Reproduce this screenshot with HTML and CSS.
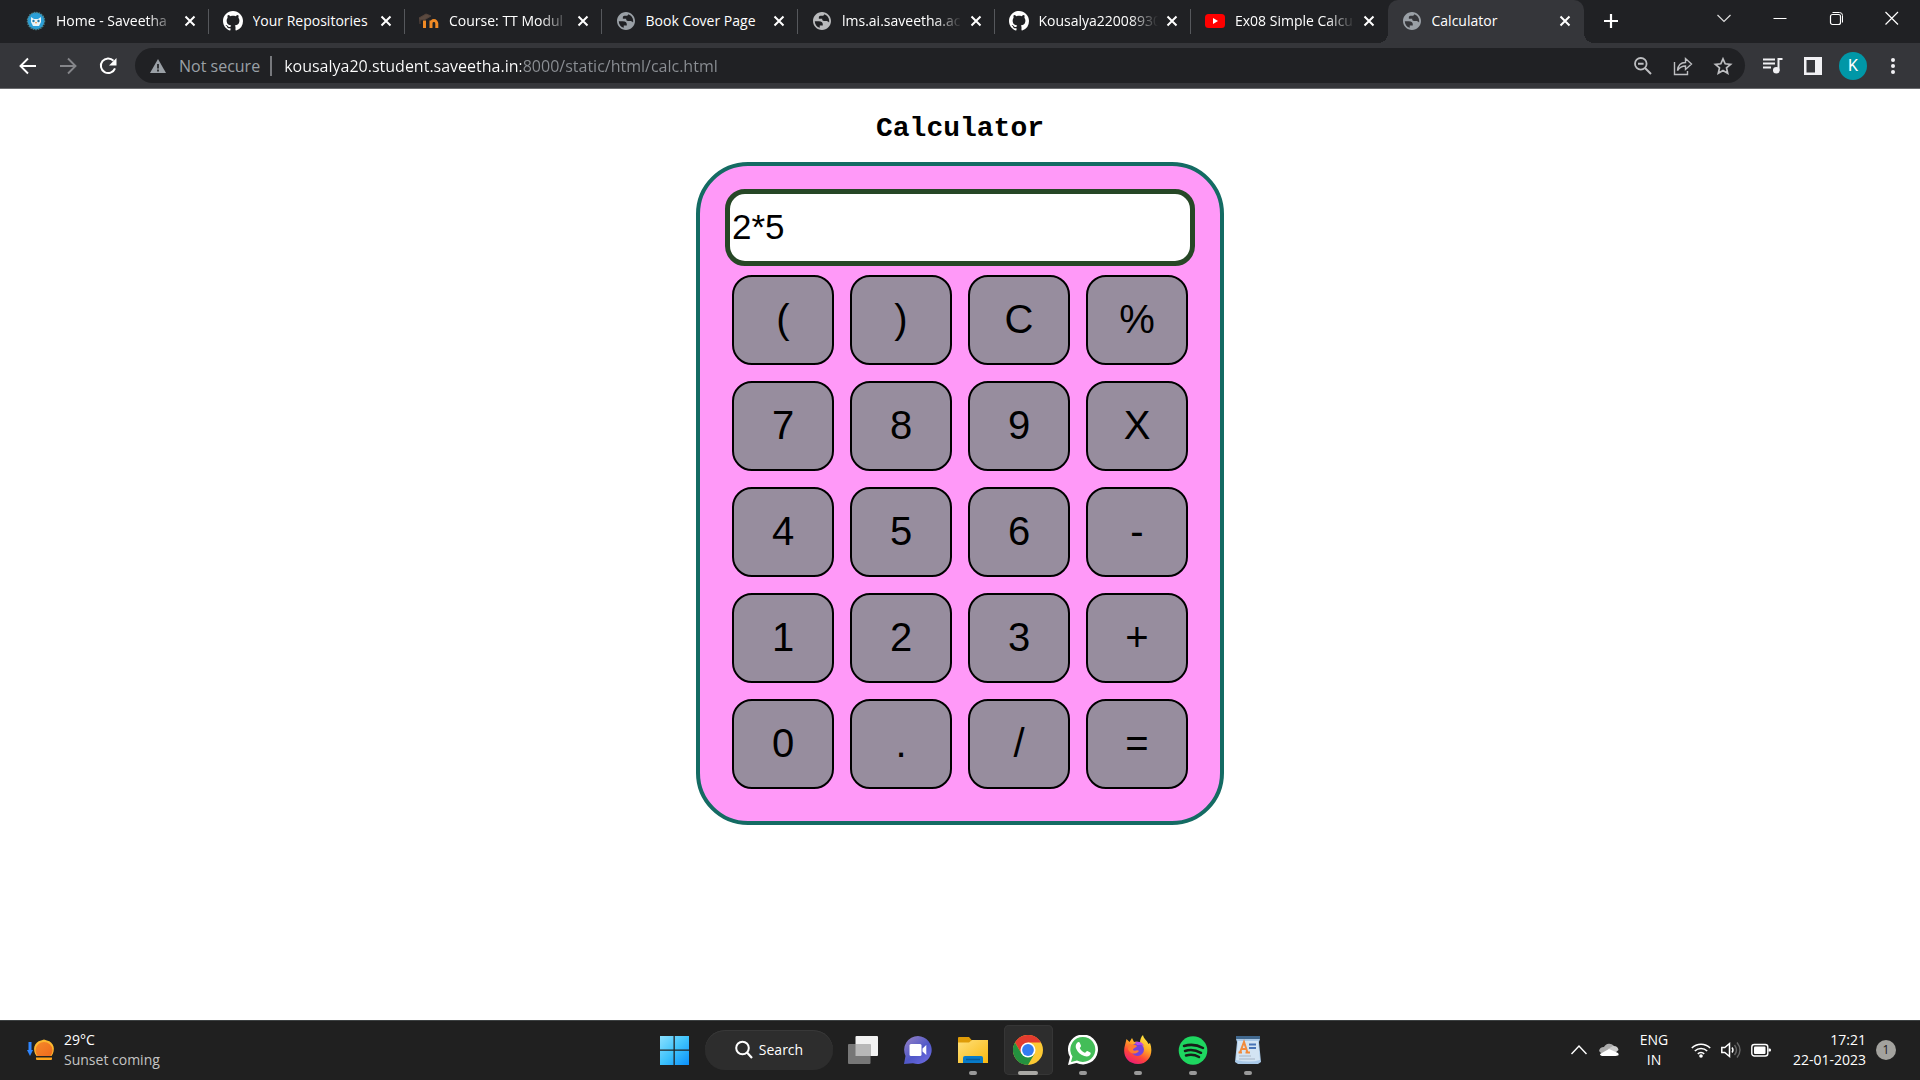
FILE: index.html
```html
<!DOCTYPE html>
<html lang="en">
<head>
<meta charset="utf-8">
<meta name="viewport" content="width=device-width, initial-scale=1">
<title>Calculator</title>
<link rel="stylesheet" href="styles.css">
</head>
<body>
<svg class="defs" aria-hidden="true">
  <defs>
    <symbol id="x" viewBox="0 0 20 20"><path d="M5.500 5.500l9 9M14.500 5.500l-9 9" stroke="currentColor" stroke-width="2" fill="none"/></symbol>
    <symbol id="globe" viewBox="2 2 20 20"><path fill="currentColor" d="M12 2C6.480 2 2 6.480 2 12s4.480 10 10 10 10-4.480 10-10S17.520 2 12 2zM4 12.200h4.400c3.400 0 4.900 1.600 4.500 4.700H9.500v2.700C6.300 18.500 4 15.700 4 12.200zM14.500 4.400C17.700 5.500 20 8.500 20 12c0 .6-.1 1.100-.2 1.600-.8-1-1.900-1.600-3.200-1.600h-2.500c-1 0-1.900-.9-1.900-1.900V9.500H8.500V7.800c0-.9.800-1.700 1.700-1.700h2.500c.9 0 1.700-.8 1.800-1.700z"/></symbol>
    <symbol id="octocat" viewBox="0 0 16 16"><path fill="#fff" d="M8 0C3.580 0 0 3.580 0 8c0 3.540 2.290 6.530 5.470 7.590.4.070.55-.17.55-.38 0-.19-.01-.82-.01-1.490-2.010.37-2.530-.49-2.690-.94-.09-.23-.48-.94-.82-1.130-.28-.15-.68-.52-.01-.53.63-.01 1.080.58 1.230.82.720 1.210 1.870.87 2.330.66.070-.52.280-.87.510-1.070-1.780-.2-3.640-.89-3.640-3.950 0-.87.310-1.590.82-2.150-.08-.2-.36-1.020.08-2.120 0 0 .67-.21 2.200.82.640-.18 1.320-.27 2-.27s1.360.09 2 .27c1.530-1.040 2.200-.82 2.200-.82.440 1.100.160 1.920.080 2.120.510.560.820 1.270.820 2.150 0 3.070-1.870 3.750-3.650 3.950.290.250.540.730.540 1.480 0 1.070-.01 1.930-.01 2.200 0 .21.150.46.550.38A8.010 8.010 0 0 0 16 8c0-4.420-3.580-8-8-8z"/></symbol>
  </defs>
</svg>

<header class="browser">
  <div class="titlebar">
    <nav class="tabs" aria-label="Tabs">
      <div class="tab">
        <svg class="favicon" viewBox="0 0 20 20"><circle cx="10" cy="10" r="8.500" fill="#2a9fd8" stroke="#49838d" stroke-width="1.500" stroke-dasharray="1.500 1"/><path d="M5 6l3 2h4l3-2v5l-2 4H7l-2-4z" fill="#e9f4f8"/><circle cx="7.500" cy="10" r="1.200" fill="#237aa8"/><circle cx="12.500" cy="10" r="1.200" fill="#237aa8"/><path d="M9 11h2l-1 2z" fill="#f0913d"/></svg>
        <a class="tab-title long" href="#">Home - Saveetha</a>
        <button class="tab-close" aria-label="Close tab"><svg viewBox="0 0 20 20"><use href="#x"/></svg></button>
      </div>
      <div class="tab">
        <svg class="favicon" viewBox="0 0 16 16"><use href="#octocat"/></svg>
        <a class="tab-title" href="#">Your Repositories</a>
        <button class="tab-close" aria-label="Close tab"><svg viewBox="0 0 20 20"><use href="#x"/></svg></button>
      </div>
      <div class="tab">
        <svg class="favicon" viewBox="0 0 20 20"><path d="M5.500 17V9.500M12 17v-4.500a2.900 2.900 0 0 1 5.800 0V17M12 17v-7.500" fill="none" stroke="#f08a25" stroke-width="3"/><path d="M0 7l7-4 5 2-6 3.500-5 .5v4" fill="#5b4a40" stroke="#54433a" stroke-width="1"/></svg>
        <a class="tab-title long" href="#">Course: TT Modul</a>
        <button class="tab-close" aria-label="Close tab"><svg viewBox="0 0 20 20"><use href="#x"/></svg></button>
      </div>
      <div class="tab">
        <svg class="favicon globe" viewBox="0 0 20 20"><use href="#globe" x="1" y="1" width="18" height="18"/></svg>
        <a class="tab-title" href="#">Book Cover Page</a>
        <button class="tab-close" aria-label="Close tab"><svg viewBox="0 0 20 20"><use href="#x"/></svg></button>
      </div>
      <div class="tab">
        <svg class="favicon globe light" viewBox="0 0 20 20"><use href="#globe" x="1" y="1" width="18" height="18"/></svg>
        <a class="tab-title long" href="#">lms.ai.saveetha.ac</a>
        <button class="tab-close" aria-label="Close tab"><svg viewBox="0 0 20 20"><use href="#x"/></svg></button>
      </div>
      <div class="tab">
        <svg class="favicon" viewBox="0 0 16 16"><use href="#octocat"/></svg>
        <a class="tab-title long" href="#">Kousalya22008930</a>
        <button class="tab-close" aria-label="Close tab"><svg viewBox="0 0 20 20"><use href="#x"/></svg></button>
      </div>
      <div class="tab last">
        <svg class="favicon" viewBox="0 0 20 20"><rect y="3" width="20" height="14" rx="3.500" fill="#f00"/><path d="M8 7l5 3-5 3z" fill="#fff"/></svg>
        <a class="tab-title long" href="#">Ex08 Simple Calcu</a>
        <button class="tab-close" aria-label="Close tab"><svg viewBox="0 0 20 20"><use href="#x"/></svg></button>
      </div>
      <div class="tab active">
        <svg class="favicon globe" viewBox="0 0 20 20"><use href="#globe" x="1" y="1" width="18" height="18"/></svg>
        <a class="tab-title" href="#">Calculator</a>
        <button class="tab-close" aria-label="Close tab"><svg viewBox="0 0 20 20"><use href="#x"/></svg></button>
      </div>
    </nav>
    <div class="window-controls">
      <button class="new-tab" aria-label="New tab"><svg viewBox="0 0 20 20"><path d="M10 3v14M3 10h14" stroke="#fff" stroke-width="2.200"/></svg></button>
      <button class="control first" aria-label="Search tabs"><svg viewBox="0 0 20 20"><path d="M3.500 7l6.500 6.500L16.500 7" fill="none" stroke="#ddd" stroke-width="1.200"/></svg></button>
      <button class="control" aria-label="Minimize"><svg viewBox="0 0 20 20"><path d="M3.500 10.500h13" stroke="#fff"/></svg></button>
      <button class="control" aria-label="Restore"><svg viewBox="0 0 20 20"><rect x="4.500" y="6.500" width="10" height="10" rx="2" fill="none" stroke="#fff" stroke-width="1.200"/><path d="M6.500 4.500h7a3 3 0 0 1 3 3v7" fill="none" stroke="#fff"/></svg></button>
      <button class="control" aria-label="Close"><svg viewBox="0 0 20 20"><path d="M3.500 4l12.500 12.500M16 4L3.500 16.500" stroke="#fff" stroke-width="1.200"/></svg></button>
    </div>
  </div>

  <div class="toolbar">
    <button class="tool" aria-label="Back"><svg viewBox="0 0 20 20"><path d="M18 10H3M10 2.500L2.500 10l7.500 7.500" fill="none" stroke="#fff" stroke-width="1.900"/></svg></button>
    <button class="tool" aria-label="Forward"><svg viewBox="0 0 20 20"><path d="M2 10h15M10 2.500l7.500 7.500-7.500 7.500" fill="none" stroke="#85868a" stroke-width="1.900"/></svg></button>
    <button class="tool" aria-label="Reload"><svg viewBox="0 0 20 20"><path d="M15.500 4.700A7.300 7.300 0 1 0 17 12.300" fill="none" stroke="#fff" stroke-width="2"/><path d="M18.500 2v7.500H11z" fill="#fff"/></svg></button>
    <div class="omnibox">
      <svg class="warning" viewBox="0 0 16 16"><path d="M8 1L0 15h16z" fill="#9aa0a6"/><path d="M8 6v4.500M8 11.500v2" stroke="#202124" stroke-width="1.700"/></svg>
      <label class="security" for="address">Not secure</label>
      <input class="address" id="address" type="text" value="kousalya20.student.saveetha.in:8000/static/html/calc.html">
      <button class="tool" aria-label="Zoom"><svg class="dim" viewBox="0 0 20 20"><circle cx="7.800" cy="7.800" r="5.800" fill="none" stroke="currentColor" stroke-width="1.800"/><path d="M5 7.800h5.600M12 12l6 6" stroke="currentColor" stroke-width="2"/></svg></button>
      <button class="tool" aria-label="Share"><svg class="dim" viewBox="0 0 20 20"><path d="M1.500 6v12.500h13V15M4.500 14.500C5 9 8 6.500 12.500 6.500V2.500l6 5.500-6 5.500V10C8.500 10 6.500 11.500 4.500 14.500z" fill="none" stroke="currentColor" stroke-width="1.400"/></svg></button>
      <button class="tool" aria-label="Bookmark"><svg class="dim" viewBox="0 0 20 20"><path d="M10 2.800l2.200 5 5.400.5-4.100 3.600 1.200 5.300-4.700-2.800-4.700 2.800 1.200-5.300-4.100-3.600 5.400-.5z" fill="none" stroke="currentColor" stroke-width="1.700"/></svg></button>
    </div>
    <button class="tool" aria-label="Media"><svg viewBox="0 0 20 20"><path d="M0 3.500h12M0 7.500h12M0 11.500h8" stroke="#f1f1f4" stroke-width="2"/><path d="M15.500 14.500V3h4" fill="none" stroke="#f1f1f4" stroke-width="2"/><circle cx="13.300" cy="14.300" r="3.300" fill="#f1f1f4"/></svg></button>
    <button class="tool" aria-label="Side panel"><svg viewBox="0 0 20 20"><path d="M1 1h18v18H1zM3.500 4v12.500H12V4z" fill="#f1f1f4" fill-rule="evenodd"/></svg></button>
    <button class="tool" aria-label="Profile"><span class="avatar">K</span></button>
    <button class="tool" aria-label="Menu"><svg viewBox="0 0 20 20" fill="#f1f1f4"><circle cx="10" cy="4" r="2"/><circle cx="10" cy="10" r="2"/><circle cx="10" cy="16" r="2"/></svg></button>
  </div>
</header>

<main class="page">
  <h1 class="heading">Calculator</h1>
  <form class="calculator">
    <input class="display" type="text" aria-label="Expression" value="2*5">
    <div class="keys">
      <button type="button" class="key">(</button>
      <button type="button" class="key">)</button>
      <button type="button" class="key">C</button>
      <button type="button" class="key">%</button>
      <button type="button" class="key">7</button>
      <button type="button" class="key">8</button>
      <button type="button" class="key">9</button>
      <button type="button" class="key">X</button>
      <button type="button" class="key">4</button>
      <button type="button" class="key">5</button>
      <button type="button" class="key">6</button>
      <button type="button" class="key">-</button>
      <button type="button" class="key">1</button>
      <button type="button" class="key">2</button>
      <button type="button" class="key">3</button>
      <button type="button" class="key">+</button>
      <button type="button" class="key">0</button>
      <button type="button" class="key">.</button>
      <button type="button" class="key">/</button>
      <button type="button" class="key">=</button>
    </div>
  </form>
</main>

<footer class="taskbar">
  <button class="weather">
    <svg viewBox="0 0 30 22"><defs><linearGradient id="sun" x2="1" y2="1"><stop stop-color="#f58a2a"/><stop offset="1" stop-color="#ee6a1c"/></linearGradient></defs><path d="M4 3v9" stroke="#2f86ff" stroke-width="3"/><path d="M1 11h6l-3 6z" fill="#2f86ff"/><path d="M10.500 17C6 11 8 3 15 1.500l3-1 3 1c7 1.500 9 9.500 4.500 15.500z" fill="#fcb82f"/><path d="M11.500 17a8.500 8.500 0 1 1 13 0z" fill="url(#sun)"/><path d="M10 18.500h16v1.500q0 1-1 1H11q-1 0-1-1z" fill="#fba51c"/></svg>
    <span class="lines"><span>29°C</span><span class="muted">Sunset coming</span></span>
  </button>

  <nav class="apps" aria-label="Apps">
    <button class="app" aria-label="Start"><svg viewBox="0 0 30 30"><defs><linearGradient id="win" x2="1" y2="1"><stop stop-color="#8be0ff"/><stop offset=".5" stop-color="#3fc3fb"/><stop offset="1" stop-color="#0a8ffb"/></linearGradient></defs><path fill="url(#win)" d="M1 1h13.500v13.500H1zM15.800 1H30v13.500H15.800zM1 15.800h13.500V30H1zM15.800 15.800H30V30H15.800z"/></svg></button>
    <button class="search"><svg viewBox="0 0 20 20"><circle cx="8.500" cy="8" r="6.300" fill="none" stroke="#fff" stroke-width="2"/><path d="M13 12.500l5 5.500" stroke="#fff" stroke-width="2.200"/></svg>Search</button>
    <button class="app" aria-label="Task view"><svg viewBox="0 0 30 30"><rect x="7.500" y="1" width="22.500" height="20" rx="1" fill="#f2f2f2"/><rect y="9" width="22.500" height="20" rx="1" fill="#777"/><path d="M7.500 9h15v12h-15z" fill="#b8b8b8"/></svg></button>
    <button class="app" aria-label="Chat"><svg viewBox="0 0 30 30"><defs><linearGradient id="chat" x2=".8" y2="1"><stop stop-color="#9a84c4"/><stop offset=".6" stop-color="#5058c8"/><stop offset="1" stop-color="#6b6ae0"/></linearGradient></defs><path d="M15 1a14 14 0 1 1-5 27.200L1 29l1.500-8A14 14 0 0 1 15 1z" fill="url(#chat)"/><rect x="6.500" y="9" width="12" height="12" rx="1.500" fill="#fff"/><path d="M19.500 13.500l3.800-3.500v10l-3.800-3.500z" fill="#fff"/></svg></button>
    <button class="app running" aria-label="File Explorer"><svg viewBox="0 0 30 30"><defs><linearGradient id="folder" x2="1" y2="1"><stop stop-color="#ffe07a"/><stop offset="1" stop-color="#f9b80f"/></linearGradient></defs><path d="M0 3q0-1 1-1h10l3 3.500H25V9H0z" fill="#df9c08"/><path d="M0 7.500h11L14 5h16v23H0z" fill="url(#folder)"/><path d="M5 28v-5q0-2 2-2h16q2 0 2 2v5z" fill="#087bc9"/><path d="M8 24.500h14" stroke="#075b99" stroke-width="1.500"/></svg></button>
    <button class="app running current" aria-label="Chrome"><svg viewBox="0 0 30 30"><circle cx="15" cy="15" r="15" fill="#fcc934"/><path d="M2 7.500A15 15 0 0 1 28 7.500H15L8.500 18.700z" fill="#e33b2e"/><path d="M2 7.500A15 15 0 0 0 15 30l6.500-11.200L15 15 8.500 18.700z" fill="#24913f"/><circle cx="15" cy="15" r="7.500" fill="#fff"/><circle cx="15" cy="15" r="5.900" fill="#347cf0"/></svg></button>
    <button class="app running" aria-label="WhatsApp"><svg viewBox="0 0 30 30"><path d="M0 30l2-8A15 15 0 1 1 8.500 28z" fill="#fff"/><path d="M3 27l1.500-5.500A12.500 12.500 0 1 1 9 25.500z" fill="#43bd58"/><path d="M9 8c1-1.300 2.200-1.200 2.800-.3l1.200 3c.3.800-1.500 2-1.200 2.600 1.200 2.200 2.900 3.600 5 4.500.7.300 1.700-2.100 2.500-1.800l3 1.500c.8.500.3 2.200-.8 3.100-1.300 1.100-3.200 1.300-5.300.5-4-1.400-6.300-3.700-8-7.300-.9-2.100-.6-4.200.8-5.800z" fill="#fff"/></svg></button>
    <button class="app running" aria-label="Firefox"><svg viewBox="0 0 30 30"><defs><linearGradient id="fox" x1=".8" x2=".3" y2="1"><stop stop-color="#fff044"/><stop offset=".4" stop-color="#ffaa26"/><stop offset=".7" stop-color="#ff4838"/><stop offset="1" stop-color="#eb1a78"/></linearGradient></defs><path d="M3.500 4l3 3 2.500-4 2 4c3-.8 5 .2 6 1 0-3.500 1-6 3-8 .5 4 4 5 5.500 9l1.500-1c4 10-1 21-12 21S-1 20 2 10z" fill="url(#fox)"/><circle cx="14.500" cy="14.500" r="6.500" fill="#7444db"/><path d="M6 9c3 1 6 0 8 2-1 2-4 2-4 4 2 2 4-1 6 1-4 5-10 2-11-2z" fill="#ff7a30"/><path d="M12 7c4-1 8 0 9 4-3-2-5-1-7-1z" fill="#b548ee"/></svg></button>
    <button class="app running" aria-label="Spotify"><svg viewBox="0 0 30 30"><circle cx="15" cy="15.500" r="14.300" fill="#1ed760"/><path d="M6 11q10-3 19 2M7 16q8-2.500 16 1.800M8 20.500q7-2 13 1.500" fill="none" stroke="#171f19" stroke-width="2.500" stroke-linecap="round"/></svg></button>
    <button class="app running" aria-label="WordPad"><svg viewBox="0 0 30 30"><path d="M3 1h24v3l-1 3 2 20-3 2H5l-3-2L4 7 3 4z" fill="#a9c9e8"/><path d="M3 1h24v3H3z" fill="#41688e"/><path d="M5 6h20l2 19q-10 3-24 0z" fill="#d3e4f3"/><path d="M7 17.500L11 7l3.500 10.500M8.500 14h5M5.500 17.500H9M12.500 17.500H17" fill="none" stroke="#f28b3c" stroke-width="2"/><path d="M16 9.500h7M16 13h7" stroke="#4773b6" stroke-width="1.800"/><path d="M6 21h12M6 24h16" stroke="#a8b5c4"/></svg></button>
  </nav>

  <div class="tray">
    <button class="tray-icon" aria-label="Show hidden icons"><svg viewBox="0 0 20 20"><path d="M2.500 14l7.500-8 7.500 8" fill="none" stroke="#fff" stroke-width="1.400"/></svg></button>
    <button class="tray-icon" aria-label="OneDrive"><svg viewBox="0 0 20 20"><path d="M0 11a5 5 0 0 1 5-4 6 6 0 0 1 10-1l-3 5-8 4z" fill="#aaa"/><path d="M14 6a5 5 0 0 1 5.500 4L16 13 9 9z" fill="#ccc"/><path d="M1 14l9-5 9 4q2 3-2.500 3h-12Q1 16 1 14z" fill="#fff"/></svg></button>
    <button class="language lines"><span>ENG</span><span>IN</span></button>
    <button class="tray-icon" aria-label="Wi-Fi"><svg viewBox="0 0 20 20"><path d="M.8 8a13 13 0 0 1 18.400 0M3.800 11a8.800 8.800 0 0 1 12.400 0M6.800 13.900a4.600 4.600 0 0 1 6.400 0" fill="none" stroke="#fff" stroke-width="1.500"/><circle cx="10" cy="16" r="1.800" fill="#fff"/></svg></button>
    <button class="tray-icon" aria-label="Volume"><svg viewBox="0 0 20 20"><path d="M.8 7.500h3L8.500 3.500v13L3.800 12.500h-3z" fill="none" stroke="#fff" stroke-width="1.500"/><path d="M11 7.500q2 2.500 0 5" fill="none" stroke="#fff" stroke-width="1.400"/><path d="M13.500 5q4 5 0 10M16 2.500q6 7.500 0 15" fill="none" stroke="#666" stroke-width="1.400"/></svg></button>
    <button class="tray-icon" aria-label="Battery"><svg viewBox="0 0 20 20"><rect x=".8" y="4.500" width="16" height="11.500" rx="2.500" fill="none" stroke="#fff" stroke-width="1.400"/><rect x="3" y="6.500" width="11.500" height="7.500" rx="1" fill="#fff"/><path d="M17.500 8.500H19q1 0 1 1.500t-1 1.500h-1.500z" fill="#fff"/></svg></button>
    <button class="clock lines"><span>17:21</span><span>22-01-2023</span></button>
    <span class="badge">1</span>
  </div>
</footer>
</body>
</html>
```
FILE: styles.css
```css
* { box-sizing: border-box; }

body {
  margin: 0;
  min-height: 100vh;
  display: flex;
  flex-direction: column;
  background: #fff;
  font-family: "Open Sans", "Noto Sans", sans-serif;
  font-size: 14px;
}

button {
  margin: 0;
  padding: 0;
  border: 0;
  background: none;
  color: inherit;
  font: inherit;
}

svg { display: block; }
.defs { display: none; }

/* Browser frame */
.browser {
  background: #35363a;
  border-bottom: 1px solid #6a6b6e;
  color: #fff;
}

.titlebar {
  display: flex;
  height: 43px;
  background: #202124;
}

.tabs {
  flex: 1;
  min-width: 0;
  display: flex;
  padding-left: 12px;
}

.tab {
  position: relative;
  flex: 1 1 0;
  min-width: 0;
  display: flex;
  align-items: center;
  padding: 0 9px 2px 14px;
}

.tab:not(.last):not(.active)::after {
  content: "";
  position: absolute;
  right: 0;
  top: 9px;
  width: 1px;
  height: 25px;
  background: #56585c;
}

.tab.active {
  background: #35363a;
  border-radius: 10px 10px 0 0;
}

.tab.active::before,
.tab.active::after {
  content: "";
  position: absolute;
  bottom: 0;
  width: 10px;
  height: 10px;
}

.tab.active::before {
  right: 100%;
  background: radial-gradient(circle at 0 0, transparent 10px, #35363a 10px);
}

.tab.active::after {
  left: 100%;
  background: radial-gradient(circle at 100% 0, transparent 10px, #35363a 10px);
}

.favicon { width: 20px; height: 20px; flex: none; }
.globe { color: #9aa0a6; }
.globe.light { color: #b9babc; }

.tab-title {
  flex: 1;
  min-width: 0;
  margin-left: 10px;
  overflow: hidden;
  white-space: nowrap;
  color: #fff;
  text-decoration: none;
  line-height: 20px;
}

.tab-title.long {
  mask-image: linear-gradient(to left, transparent 4px, #000 32px);
}

.tab-close { flex: none; width: 20px; height: 20px; }

.window-controls {
  flex: none;
  width: 336px;
  display: flex;
  padding-left: 9px;
}

.new-tab { width: 36px; height: 42px; }
.control { width: 56px; height: 36px; }
.control.first { margin-left: auto; }
.window-controls svg { width: 20px; height: 20px; margin: 0 auto; }

.toolbar {
  display: flex;
  align-items: center;
  height: 45px;
  padding: 0 7px 0 8px;
}

.tool { flex: none; width: 40px; height: 36px; }
.tool svg { width: 20px; height: 20px; margin: 0 auto; }
.dim { color: #bdbec1; }

.omnibox {
  flex: 1;
  min-width: 0;
  display: flex;
  align-items: center;
  height: 35px;
  margin: 0 8px 0 7px;
  padding: 0 2px 0 15px;
  border-radius: 18px;
  background: #202124;
  font-size: 16px;
}

.warning { width: 16px; height: 16px; flex: none; }

.security {
  margin-left: 13px;
  padding-right: 10px;
  border-right: 2px solid #77797d;
  color: #9aa0a6;
  line-height: 20px;
}

.address {
  flex: 1;
  min-width: 0;
  height: 30px;
  padding: 0 0 0 12px;
  border: 0;
  outline: 0;
  background: linear-gradient(to right, #fff 249px, #8b8f94 249px);
  background-clip: text;
  color: #fff;
  -webkit-text-fill-color: transparent;
  font: inherit;
}

.avatar {
  display: block;
  width: 28px;
  margin: 0 auto;
  border-radius: 50%;
  background: #0097a7;
  font-family: Roboto, sans-serif;
  font-size: 16px;
  line-height: 28px;
  text-align: center;
}

/* Calculator page */
.page {
  flex: 1;
  padding: 24px 8px;
}

.heading {
  margin: 0 0 17px;
  font: bold 28px/32px "Liberation Mono", monospace;
  text-align: center;
}

.calculator {
  width: 528px;
  max-width: 100%;
  margin: 0 auto;
  padding: 23px 25px 32px;
  border: 4px solid #146b63;
  border-radius: 52px;
  background: #ff99f8;
}

.display {
  display: block;
  width: 100%;
  height: 77px;
  padding: 0 2px 2px;
  border: 5px solid #264726;
  border-radius: 20px;
  background: #fff;
  color: #000;
  font: 35px "Liberation Sans", sans-serif;
}

.keys {
  display: grid;
  grid-template-columns: repeat(4, 1fr);
  gap: 16px;
  padding: 9px 7px 0;
}

.key {
  height: 90px;
  padding-bottom: 2px;
  border: 2px solid #000;
  border-radius: 20px;
  background: #978d9e;
  color: #000;
  font: 40px "Liberation Sans", sans-serif;
}

/* Desktop taskbar */
.taskbar {
  display: grid;
  grid-template-columns: 1fr auto 1fr;
  align-items: center;
  height: 60px;
  padding: 0 24px 2px 26px;
  border-top: 1px solid #3c4041;
  background: #202020;
  color: #fff;
}

.lines {
  display: flex;
  flex-direction: column;
  line-height: 20px;
}

.muted { color: #c4c4c4; }

.weather {
  justify-self: start;
  display: flex;
  align-items: center;
  gap: 8px;
  text-align: left;
}

.weather svg { width: 30px; height: 22px; }

.apps {
  display: flex;
  align-items: center;
  gap: 6px;
}

.app {
  position: relative;
  width: 49px;
  height: 50px;
  border-radius: 5px;
}

.app svg { width: 30px; height: 30px; margin: 0 auto; }
.app.current { background: #2d2d2d; box-shadow: inset 0 0 0 1px #363636; }

.running::after {
  content: "";
  position: absolute;
  left: 50%;
  bottom: 0;
  width: 8px;
  height: 4px;
  border-radius: 2px;
  background: #999;
  transform: translateX(-50%);
}

.current::after { width: 20px; background: #aaa9a5; }

.search {
  display: flex;
  align-items: center;
  justify-content: center;
  gap: 5px;
  width: 128px;
  height: 40px;
  border-radius: 20px;
  background: #2d2d2d;
  box-shadow: inset 0 1px 0 #383838;
}

.search svg { width: 20px; height: 20px; }

.tray {
  justify-self: end;
  display: flex;
  align-items: center;
  gap: 10px;
}

.tray-icon svg { width: 20px; height: 20px; }
.language { width: 50px; align-items: center; }
.language + .tray-icon { margin-left: 2px; }
.clock { width: 85px; align-items: flex-end; }

.badge {
  width: 20px;
  border-radius: 50%;
  background: #a3a29e;
  color: #202020;
  font-size: 12px;
  line-height: 20px;
  text-align: center;
}
```
